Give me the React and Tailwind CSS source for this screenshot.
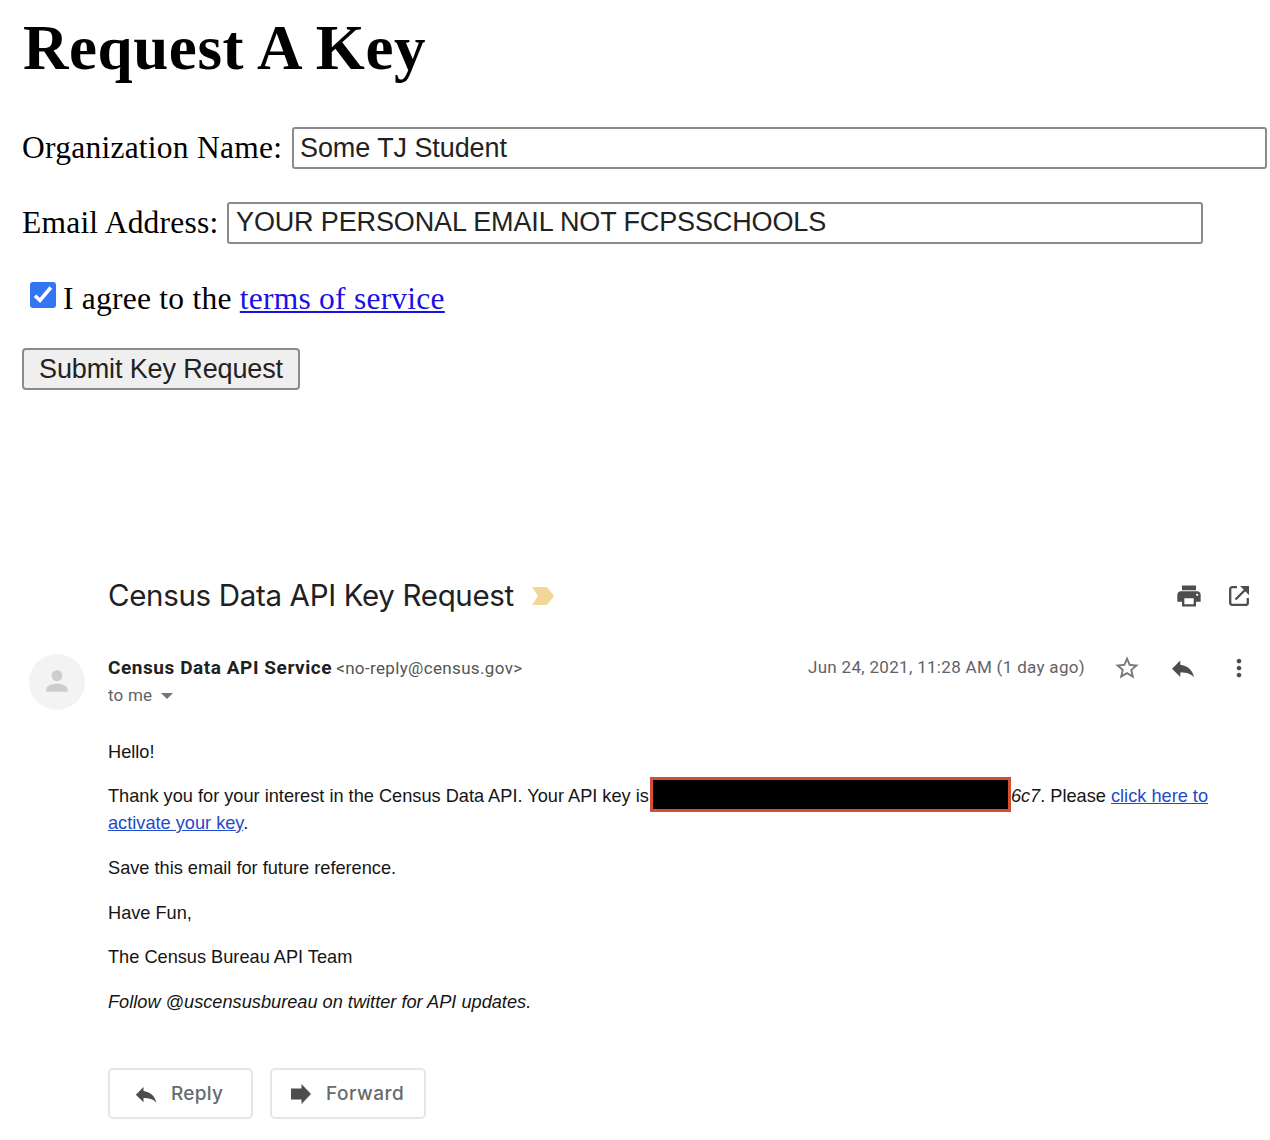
function Icon({ d, className }) {
  return (
    <svg viewBox="0 0 24 24" fill="currentColor" className={className}>
      <path d={d} />
    </svg>
  );
}

const icons = {
  print:
    "M19 8H5c-1.66 0-3 1.34-3 3v6h4v4h12v-4h4v-6c0-1.66-1.34-3-3-3zm-3 11H8v-5h8v5zm3-7c-.55 0-1-.45-1-1s.45-1 1-1 1 .45 1 1-.45 1-1 1zm-1-9H6v4h12V3z",
  star:
    "M22 9.24l-7.19-.62L12 2 9.19 8.63 2 9.24l5.46 4.73L5.82 21 12 17.27 18.18 21l-1.63-7.03L22 9.24zM12 15.4l-3.76 2.27 1-4.28-3.32-2.88 4.38-.38L12 6.1l1.71 4.04 4.38.38-3.32 2.88 1 4.28L12 15.4z",
  reply: "M2.6 12.6 9.700 5.500V9.200C15.500 9.800 20.200 13.600 21.500 20C18.500 16.600 14.500 15.700 9.700 15.800V19.700z",
  more:
    "M12 8c1.1 0 2-.9 2-2s-.9-2-2-2-2 .9-2 2 .9 2 2 2zm0 2c-1.1 0-2 .9-2 2s.9 2 2 2 2-.9 2-2-.9-2-2-2zm0 6c-1.1 0-2 .9-2 2s.9 2 2 2 2-.9 2-2-.9-2-2-2z",
  person:
    "M12 12c2.21 0 4-1.79 4-4s-1.79-4-4-4-4 1.790-4 4 1.790 4 4 4zm0 2c-2.670 0-8 1.340-8 4v2h16v-2c0-2.660-5.330-4-8-4z",
  forward: "M0 5.400H12.600V0L24 12 12.600 24V18.600H0z",
};

function OpenIcon({ className }) {
  return (
    <svg viewBox="0 0 28 28" className={className}>
      <path
        d="M12 5.200H7a1.800 1.800 0 0 0-1.800 1.800v14A1.800 1.800 0 0 0 7 22.800h14a1.800 1.800 0 0 0 1.800-1.800v-5M10.500 17.500 20 8"
        fill="none"
        stroke="currentColor"
        strokeWidth="2.3"
      />
      <path d="M15 4H24V13L21.200 10.200 17.800 6.800z" fill="currentColor" />
    </svg>
  );
}

function KeyForm() {
  return (
    <form className="h-[560px] pl-[22px] pt-[14px] font-['Liberation_Serif',serif] text-[31.5px] leading-[36px] text-black">
      <h1 className="h-[113px] pl-px text-[63px] font-bold leading-[69px] tracking-[0.58px]">Request A Key</h1>
      <div className="flex h-[42px] items-center">
        <label className="w-[270px] shrink-0 tracking-[0.25px]">Organization Name:</label>
        <input
          readOnly
          value="Some TJ Student"
          className="h-[42px] w-[975px] rounded-[3px] border-2 border-[#8b8b8b] px-[6px] font-['Liberation_Sans',sans-serif] text-[27px] tracking-[-0.08px] text-[#222]"
        />
      </div>
      <div className="mt-[33px] flex h-[41px] items-center">
        <label className="w-[205px] shrink-0 tracking-[0.22px]">Email Address:</label>
        <input
          readOnly
          value="YOUR PERSONAL EMAIL NOT FCPSSCHOOLS"
          className="h-[42px] w-[976px] rounded-[3px] border-2 border-[#8b8b8b] px-[7px] font-['Liberation_Sans',sans-serif] text-[27px] tracking-[-0.13px] text-[#222]"
        />
      </div>
      <div className="mt-[37px] flex h-[36px] pl-2">
        <span className="mt-[2px] flex size-[26px] items-center justify-center rounded-[3px] bg-[#3375f2]">
          <svg viewBox="0 0 26 26" className="size-[26px]" fill="none" stroke="#fff" strokeWidth="3.6">
            <path d="M5 13.800 10 18.500 20.800 5.500" />
          </svg>
        </span>
        <span className="ml-[7px] whitespace-pre pt-px tracking-[0.24px]">
          I agree to the{" "}
          <a className="text-[#1a10e8] underline decoration-2 underline-offset-[2px]">terms of service</a>
        </span>
      </div>
      <button
        type="button"
        className="mt-[32px] block h-[42px] w-[278px] rounded-[4px] border-2 border-[#8b8b8b] bg-[#efefef] font-['Liberation_Sans',sans-serif] text-[27px] leading-[38px] tracking-[-0.12px] text-[#222]"
      >
        Submit Key Request
      </button>
    </form>
  );
}

function Email() {
  return (
    <section className="font-[Roboto,sans-serif]">
      <header className="flex h-[72px] items-center pl-[108px] pr-[17px]">
        <h2 className="mb-[2px] whitespace-nowrap font-[Inter,sans-serif] text-[29.5px] tracking-[-0.33px] text-[#202124]">
          Census Data API Key Request
        </h2>
        <svg viewBox="0 0 22 18" className="ml-[18px] h-[18px] w-[22px]" fill="#f1d796">
          <path d="M0 0h15l7 9-7 9H0l6-9z" />
        </svg>
        <div className="ml-auto flex gap-[22px] text-[#4d4d4d]">
          <Icon d={icons.print} className="size-7" />
          <OpenIcon className="size-7" />
        </div>
      </header>
      <div className="flex h-[96px] pl-[29px] pr-[17px] pt-[22px]">
        <span className="flex size-[56px] items-center justify-center rounded-full bg-[#f3f3f3] text-[#cdcdcd]">
          <Icon d={icons.person} className="mb-[2px] h-[34px] w-[32px]" />
        </span>
        <div className="ml-[23px] whitespace-nowrap pt-px">
          <div className="flex h-[27px] items-center">
            <b className="text-[19px] tracking-[0.56px] text-[#202124]">Census Data API Service</b>
            <span className="ml-[4px] text-[17px] tracking-[0.35px] text-[#555]">&lt;no-reply@census.gov&gt;</span>
          </div>
          <div className="flex h-[27px] items-center text-[17px] tracking-[0.2px] text-[#5f6368]">
            to me
            <svg viewBox="0 0 12 6" className="ml-[9px] h-[6px] w-[12px]" fill="#757575">
              <path d="M0 0h12L6 6z" />
            </svg>
          </div>
        </div>
        <div className="ml-auto flex h-[28px] items-center">
          <time className="mr-[28px] whitespace-nowrap text-[17px] tracking-[0.31px] text-[#5f6368]">
            Jun 24, 2021, 11:28 AM (1 day ago)
          </time>
          <div className="flex gap-[28px] text-[#4d4d4d]">
            <Icon d={icons.star} className="size-7 text-[#777]" />
            <Icon d={icons.reply} className="size-7" />
            <Icon d={icons.more} className="size-7" />
          </div>
        </div>
      </div>
      <div className="pl-[108px] font-['Liberation_Sans',sans-serif] text-[18.2px] leading-[27px] text-[#151515]">
        <p className="pt-[11px]">Hello!</p>
        <p className="mt-[17px] whitespace-nowrap">
          Thank you for your interest in the Census Data API. Your API key is
          <span className="relative -top-[3px] -my-[5px] ml-px inline-block h-[35px] w-[361px] border-[3px] border-[#d54e31] bg-black align-middle" />
          <i>6c7</i>. Please <a className="text-[#1f4acb] underline">click here to</a>
          <br />
          <a className="text-[#1f4acb] underline">activate your key</a>.
        </p>
        <p className="mt-[18px]">Save this email for future reference.</p>
        <p className="mt-[18px]">Have Fun,</p>
        <p className="mt-[17px]">The Census Bureau API Team</p>
        <p className="mt-[18px] italic">Follow @uscensusbureau on twitter for API updates.</p>
      </div>
      <div className="mt-[52px] flex gap-[17px] pl-[108px] font-[Inter,sans-serif] text-[19px] font-medium text-[#676a6e]">
        <button type="button" className="flex h-[51px] w-[145px] items-center rounded-[5px] border-2 border-[#e5e6e9] pl-[23px]">
          <Icon d={icons.reply} className="mr-[12px] size-[26px] text-[#4d4d4d]" />
          <span className="pt-[2px] tracking-[0.3px]">Reply</span>
        </button>
        <button type="button" className="flex h-[51px] w-[156px] items-center rounded-[5px] border-2 border-[#e5e6e9] pl-[19px]">
          <Icon d={icons.forward} className="mr-[15px] size-5 text-[#4d4d4d]" />
          <span className="pt-[2px] tracking-[0.5px]">Forward</span>
        </button>
      </div>
    </section>
  );
}

export default function App() {
  return (
    <main className="h-[1140px] w-[1270px] overflow-hidden bg-white">
      <KeyForm />
      <Email />
    </main>
  );
}
